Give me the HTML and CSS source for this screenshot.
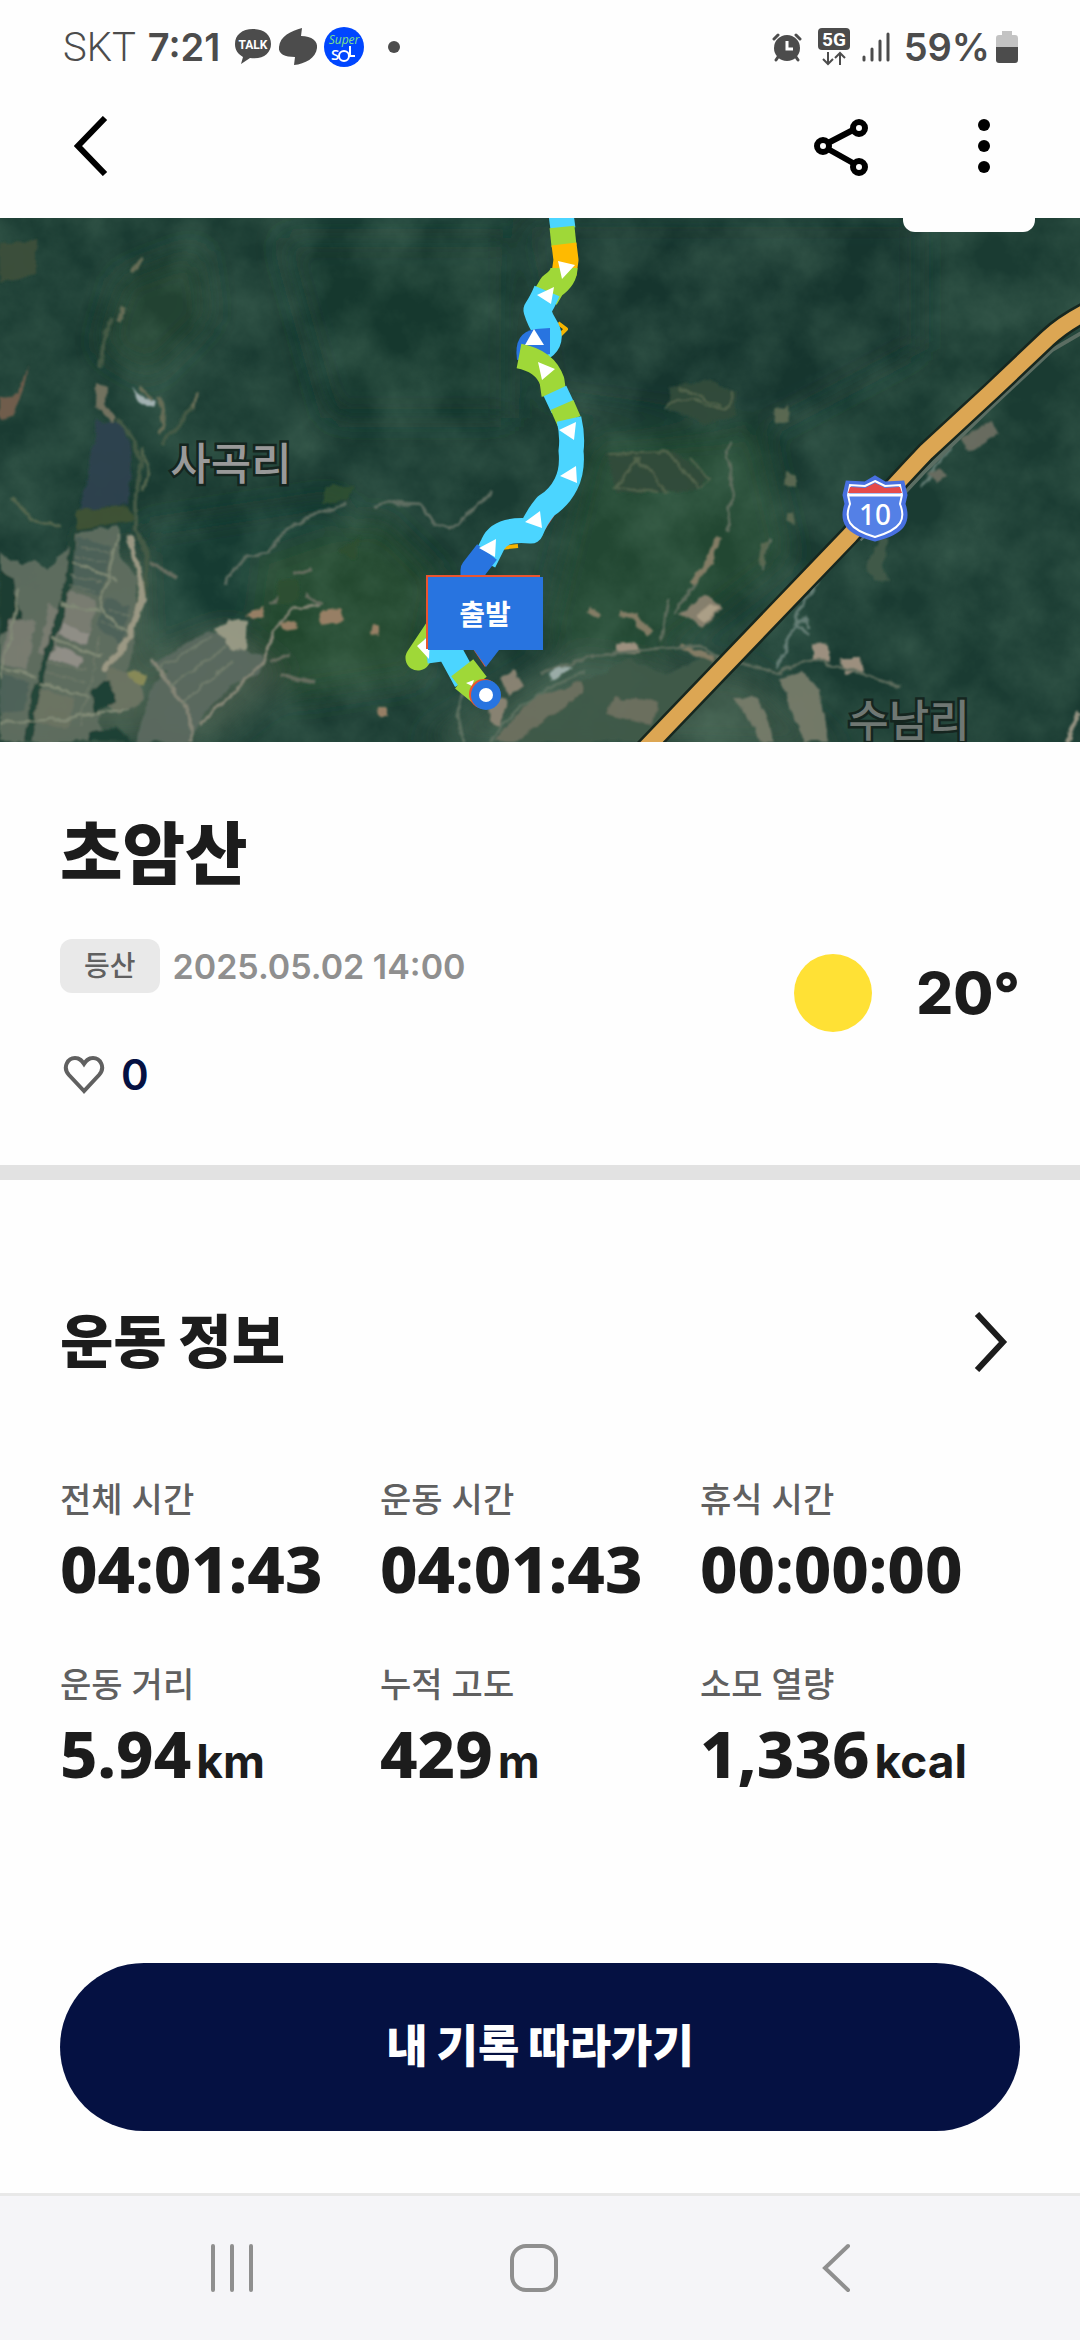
FILE: index.html
```html
<!DOCTYPE html>
<html lang="ko">
<head>
    <meta charset="UTF-8">
    <meta name="viewport" content="width=device-width, initial-scale=1.0">
    <title>초암산</title>
    <link rel="stylesheet" href="styles.css">
</head>
<body>
    <div class="status-bar">
        <div class="status-left">
            <span class="carrier">SKT</span>
            <span class="clock">7:21</span>
            <svg class="status-icon" width="38" height="40" viewBox="0 0 38 40">
                <path d="M19 2C8 2 1 8 1 17c0 6 3 10 8 13l-2 7 9-6c13 2 21-5 21-14S30 2 19 2z" fill="#4c4c4c"/>
                <text x="19" y="22" class="talk-text">TALK</text>
            </svg>
            <svg class="status-icon" width="40" height="40" viewBox="0 0 40 40">
                <path d="M24 1L23 9C34 9 40 14 39 21C38 31 27 37 16 38L17 30C7 30 0 27 1 20C2 9 13 4 24 1z" fill="#4c4c4c"/>
            </svg>
            <svg class="status-icon" width="40" height="40" viewBox="0 0 40 40">
                <circle cx="20" cy="20" r="20" fill="#0046ff"/>
                <text x="20" y="17" class="super-text">Super</text>
                <text x="7" y="33" class="sol-text">S</text>
                <circle cx="20" cy="29" r="5" fill="none" stroke="#fff" stroke-width="2"/>
                <path d="M26 19v10h5" fill="none" stroke="#fff" stroke-width="2"/>
            </svg>
            <span class="more-dot"></span>
        </div>
        <div class="status-right">
            <svg width="30" height="30" viewBox="0 0 30 30">
                <g fill="none" stroke="#4c4c4c" stroke-width="3" stroke-linecap="round">
                    <path d="M2 7l4-4M28 7l-4-4M6 25l-2 3M24 25l2 3"/>
                </g>
                <circle cx="15" cy="16" r="13" fill="#4c4c4c"/>
                <path d="M15 9v8h6" fill="none" stroke="#fff" stroke-width="3"/>
            </svg>
            <svg class="network" width="32" height="38" viewBox="0 0 32 38">
                <rect width="32" height="22" rx="4" fill="#4c4c4c"/>
                <text x="16" y="18" class="network-text">5G</text>
                <path d="M10 24v12M5 31l5 5 5-5M22 37V25M17 30l5-5 5 5" fill="none" stroke="#4c4c4c" stroke-width="2"/>
            </svg>
            <svg class="signal" width="28" height="30" viewBox="0 0 28 30">
                <path d="M2 25v3M10 17v11M18 9v19M26 2v26" fill="none" stroke="#4c4c4c" stroke-width="3" stroke-linecap="round"/>
            </svg>
            <span class="battery-text">59%</span>
            <svg width="22" height="32" viewBox="0 0 22 32">
                <path d="M6 0h10v4h3a3 3 0 0 1 3 3v10H0V7a3 3 0 0 1 3-3h3z" fill="#c3c3c3"/>
                <path d="M0 16h22v13a3 3 0 0 1-3 3H3a3 3 0 0 1-3-3z" fill="#4c4c4c"/>
            </svg>
        </div>
    </div>

    <header class="app-bar">
        <button class="icon-button" aria-label="뒤로">
            <svg width="34" height="60" viewBox="0 0 34 60"><path d="M31 2L4 30l27 28" fill="none" stroke="#000" stroke-width="6"/></svg>
        </button>
        <div class="app-actions">
            <button class="icon-button" aria-label="공유">
                <svg width="56" height="60" viewBox="0 0 56 60" fill="none" stroke="#000" stroke-width="6">
                    <path d="M15 27l25-13M15 33l25 14"/>
                    <circle cx="10" cy="30" r="6"/>
                    <circle cx="46" cy="12" r="6"/>
                    <circle cx="46" cy="51" r="6"/>
                </svg>
            </button>
            <button class="icon-button" aria-label="메뉴">
                <svg width="14" height="60" viewBox="0 0 14 60"><circle cx="7" cy="9" r="6"/><circle cx="7" cy="30" r="6"/><circle cx="7" cy="51" r="6"/></svg>
            </button>
        </div>
    </header>

    <div class="map">
        <svg class="map-canvas" viewBox="0 0 1080 524" preserveAspectRatio="xMidYMid slice">
            <defs>
                <filter id="forest" x="0" y="0" width="100%" height="100%">
                    <feTurbulence type="fractalNoise" baseFrequency="0.016" numOctaves="6" seed="21"/>
                    <feColorMatrix values="0 0 0 0 0.17  0 0 0 0 0.32  0 0 0 0 0.22  1.4 0 0 0 -0.4"/>
                </filter>
                <filter id="rough" x="-5%" y="-5%" width="110%" height="110%">
                    <feTurbulence type="fractalNoise" baseFrequency="0.07" numOctaves="3" seed="3" result="n"/>
                    <feDisplacementMap in="SourceGraphic" in2="n" scale="8" xChannelSelector="R" yChannelSelector="G"/>
                    <feGaussianBlur stdDeviation="1"/>
                </filter>
                <filter id="soft" x="-20%" y="-20%" width="140%" height="140%">
                    <feGaussianBlur stdDeviation="14"/>
                </filter>
            </defs>

            <rect width="1080" height="524" fill="#1a3b32"/>
            <g filter="url(#soft)">
                <path d="M520 0h400v130l-150 80-220-30z" fill="#15352e"/>
                <path d="M280 20h230v180H330z" fill="#16382f"/>
                <path d="M120 60l80-30 10 70-60 60-50-30z" fill="#234331"/>
                <path d="M140 310l200-30 40 110-170 50-60-10z" fill="#183a30"/>
                <path d="M260 340l120-40 60 60-20 100-130 20-40-60z" fill="#22462f"/>
                <path d="M590 220l170-10 30 130-130 100-120-10z" fill="#244733"/>
                <path d="M0 410l140-80 10 194H0zM150 440l80-30 60 50-80 64h-60z" fill="#43594a"/>
                <path d="M420 524l150-90 180 20 90 80z" fill="#385344"/>
            </g>
            <rect width="1080" height="524" filter="url(#forest)" opacity="0.35"/>

            <g filter="url(#rough)" opacity="0.95">
                <!-- clearings and reservoir on the west side -->
                <path d="M0 26l36-3v34L0 64z" fill="#3c4f3b"/>
                <path d="M28 148l-10 28-18 2v24l14-6 10-26z" fill="#755f4d"/>
                <path d="M97 202l22 2 14 28-5 54-49 7 9-37z" fill="#2d4350"/>
                <path d="M76 293l52-6 6 16-58 10z" fill="#3f5234"/>
                <path d="M97 165l9 3-1 18 12 14-5 4-16-17z" fill="#777462"/>
                <path d="M132 170l16 12 8 1-2 6-13-3z" fill="#a9b7b8"/>
                <path d="M142 40l-10 14M125 90l-6 14M195 175l-3 18M160 180l4 28-4 8M140 170l14 12" fill="none" stroke="#6a6f58" stroke-width="4"/>
                <path d="M112 100l-8 20-4 30M192 190l-30 36M118 202l16 20 8 20-7 40 0 30 12 22-2 40-12 24" fill="none" stroke="#465c46" stroke-width="4"/>
                <path d="M143 230l6 26-8 18M60 310l-26-6-24-26" fill="none" stroke="#566850" stroke-width="3"/>

                <!-- paddy fields -->
                <path d="M0 334l20 12 15-2 12 9 23-26 6-12 42-7 4 30 14 24 1 40-5 38-14 24-20 22 4 38H0z" fill="#606e61"/>
                <path d="M0 350l14 14 8 40-22 14z" fill="#1c3c31"/>
                <path d="M50 386l14 8-10 44-16-4zM66 372l30 10-6 34-30-10zM10 400l26 4-10 50-26-10z" fill="#7b7e73"/>
                <path d="M78 318l34 12-12 48-30-10zM106 380l24 8-8 40-26-20zM0 455l30 8-6 30-24 2z" fill="#50635a"/>
                <path d="M60 405l30 12-3 10-30-12zM56 428l28 10-5 12-29-8z" fill="#94918a"/>
                <path d="M36 470l40 10-8 30-38-6zM110 450l30 4 4 28-24 14-18-10z" fill="#6d7464"/>
                <path d="M74 310l-5 52-15 54-18 60-8 48" fill="none" stroke="#244437" stroke-width="7"/>
                <path d="M118 318l-18 72 34 30M72 345l44 16M60 385l40 8M52 420l50 18M38 465l50 14M0 450l34 8M0 505l60-4 70-10M20 370l-10 50-10 40" fill="none" stroke="#87907a" stroke-width="2"/>
                <path d="M80 328l30 8M76 338l30 8M70 356l30 8M68 366l28 8M108 390l22 8M102 404l22 8M48 445l38 8M46 455l38 8M100 418l-20 90" fill="none" stroke="#76806f" stroke-width="1"/>
                <path d="M129 318l12 50 2 12-14 40-25 33" fill="none" stroke="#a09c87" stroke-width="6"/>
                <path d="M90 472l20-10 6 22-22 12zM90 514l26-6 18 16h-46z" fill="#1d4134"/>
                <path d="M127 452l22 6-4 10-16-8z" fill="#8b8c58"/>

                <!-- southern fields -->
                <path d="M150 448l58-36 54 26-2 18-26 10-30 28-14 30h-54l14-50 16-20z" fill="#5c6b60"/>
                <path d="M214 412l16-10 18 2-2 26-12 4z" fill="#9b9c87"/>
                <path d="M150 440l40 54M200 505l42-38 22-26 10-30 20-20 26-4M191 494v30" fill="none" stroke="#8b8a7a" stroke-width="3"/>
                <path d="M158 452l54-34M170 468l56-40M182 486l52-44" fill="none" stroke="#75806f" stroke-width="2"/>
                <path d="M245 397l18-10 2 11-12 3zM280 405l16-2 2 8-14 2zM320 395l20-4 4 12-22 4zM372 408l8 2v8l-10-3zM376 490l12 0 0 8-8 0z" fill="#9d8268"/>
                <path d="M225 366l8-16 16-12 20-4 18-24 26-14 34-10 M374 288l10-4 36 2 16 20 14 4 24-18 18-18" fill="none" stroke="#627064" stroke-width="3"/>
                <path d="M292 356l20-6M304 376l18 10M150 344l26 16M270 386l20-20M280 456l34 10M270 444l20-8" fill="none" stroke="#6a7062" stroke-width="4"/>
                <path d="M325 268l30 0-10 14-24 4zM280 360l20 4-4 20-22 4zM340 332l20-14-6 24z" fill="#2f4f30"/>
                <path d="M500 460l14-8 10 16-14 10zM490 476l16 4-4 30-14-8z" fill="#8d8574"/>
                <path d="M466 468l-9 30 6 26M488 524l32-34 30-20 34-16M500 524l56-40 40-12" fill="none" stroke="#5f7262" stroke-width="3"/>

                <!-- fields by the highway -->
                <path d="M520 494l58-30 30-10 20-14 40 16 40-20 22 6-52 60-36 22h-122z" fill="#3f5a4a"/>
                <path d="M535 480l45-16 4 10-70 50-22 0zM614 480l44 4-6 24-46-12z" fill="#6e7160"/>
                <path d="M735 480l24 0 16 44h-14zM780 460l24-8 16 20 8 52h-24z" fill="#777b6b"/>
                <path d="M680 395l28-20 14 16-20 20z" fill="#8b8270"/>
                <path d="M695 398l14-11 10 4-14 14z" fill="#b3a48c"/>
                <path d="M812 426l16 2 2 16-18-2zM840 440l20 0 2 14-18 2zM616 426l20-2 2 12-20 0z" fill="#a39483"/>
                <path d="M548 457l14-10 10 2-20 14z" fill="#9fb0ac"/>
                <path d="M620 394l14 4 16 18M588 390l12 8M690 366l20-22 8-24M680 428l34 14" fill="none" stroke="#887f68" stroke-width="6"/>
                <path d="M540 456l50-18 60-6 50-4 30 18M674 396l20-30M728 314l4-50-6-30 8-12M668 380l-6 44M760 350l10-30M740 445l40 10 30-14 50 14 40 14" fill="none" stroke="#627060" stroke-width="3"/>
                <path d="M792 405l14-4 4 10M792 405l18 12M840 330l-42 64-20 56M920 270l30-42" fill="none" stroke="#688078" stroke-width="3"/>
                <path d="M868 344l10-24 10 0-6 28 8 16-18-2z" fill="#425a48"/>
                <path d="M960 218l34-14 4 12-26 18zM928 256l12-6 8 6-12 10z" fill="#6c6e62"/>
                <path d="M670 170l40-8 28 14-4 24-30 4-36-12zM606 236l70-2 30 24-10 14-80 4z" fill="#334c3b"/>
                <path d="M665 190c10-14 30-10 46-2s20 4 22-14M680 170l40 18M608 236l60-2 30 36 12-8-20-22M640 240l-26 30 44 4M636 240l34 36" fill="none" stroke="#56674f" stroke-width="2"/>
                <path d="M773 190l14-2 2 18-14-2zM786 255l8 2v14l-10-6zM786 295l8 0 2 12-8-2zM762 324l6 0-4 22-6 0z" fill="#5d6b53"/>
                <path d="M1066 524l14-30" stroke="#9a9685" stroke-width="5"/>
            </g>

            <!-- highway -->
            <path d="M1090 110L1052 132L990 190L926 252L860 322" fill="none" stroke="#5b6d62" stroke-width="4"/>
            <path d="M1090 92Q1064 105 1048 120L991 174L926 234Q890 272 850 317L642 534" fill="none" stroke="#17271f" stroke-width="21"/>
            <path d="M1090 92Q1064 105 1048 120L991 174L926 234Q890 272 850 317L642 534" fill="none" stroke="#dca653" stroke-width="16"/>
            <path d="M875 259l10 6 18-1 3 13-2 9c6 18 0 29-29 36-29-7-35-18-29-36l-2-9 3-13 18 1z" fill="#4870e0" stroke="#4870e0" stroke-width="3"/>
            <path d="M875 263l10 5 15-1 2 10-2 9c6 15 2 25-25 33-27-8-31-18-25-33l-2-9 2-10 15 1z" fill="#5480e6" stroke="#fff" stroke-width="2"/>
            <path d="M850 269l15 1 10-5 10 5 15-1 2 6h-54z" fill="#e54a4a"/>
            <path d="M848 277h54" stroke="#fff" stroke-width="3"/>
            <text x="875" y="307" class="shield-text">10</text>

            <text x="231" y="262" class="place">사곡리</text>
            <text x="909" y="519" class="place dim">수남리</text>

            <!-- track, coloured by speed -->
            <g fill="none" stroke-width="25" stroke-linejoin="round">
                <path d="M558 105l8 6-8 8M574 190v25M574 245l-3 18-16 26M518 328l-18 2" stroke="#f5b400" stroke-width="4"/>
                <path d="M556 288l-16 24" stroke="#d83b2e" stroke-width="8"/>
                <path d="M561-4L563 11" stroke="#4bd5ff"/>
                <path d="M562 9L564 28" stroke="#9fd838"/>
                <path d="M564 26L566 42L564 56" stroke="#ffba00"/>
                <path d="M564 50Q564 60 552 68L545 80" stroke="#9fd838" stroke-width="27"/>
                <path d="M547 73Q542 85 537 92Q540 102 546 111Q552 122 542 129" stroke="#4bd5ff" stroke-width="27"/>
                <path d="M517 142Q513 114 536 111L550 110V136z" fill="#2874e0"/>
                <path d="M519 138Q545 143 552 163L554 177" stroke="#9fd838"/>
                <path d="M555 173L563 190" stroke="#4bd5ff"/>
                <path d="M562 187L569 203" stroke="#9fd838"/>
                <path d="M569 201Q573 218 571 233Q573 252 566 266Q559 280 546 288Q536 300 531 313Q500 310 493 326L484 344" stroke="#4bd5ff"/>
                <path d="M487 334L473 352V370" stroke="#2874e0"/>
                <path d="M438 410L418 440" stroke="#9fd838" stroke-linecap="round"/>
                <path d="M426 433L448 430L466 463" stroke="#4bd5ff"/>
                <path d="M458 467L480 450M462 462L484 480" stroke="#9fd838" stroke-width="22"/>
            </g>
            <g fill="#fff">
                <path d="M558 43l17 4-13 14zM537 77l17-8-3 17zM534 111l10 16h-19zM538 144l17 7-13 11zM559 212l17-8-2 18zM560 258l16-10 1 17zM525 304l15-11 2 17zM479 330l17-9-1 18zM417 428l13-11-1 24zM466 465l8-3-2 6z"/>
            </g>

            <!-- start marker -->
            <circle cx="484" cy="476" r="15" fill="#ea5530"/>
            <circle cx="486" cy="477" r="15" fill="#2874e0"/>
            <circle cx="486" cy="477" r="7" fill="#fff"/>
            <path d="M426 357h114v74h-42l-13 18-12-18h-47z" fill="#ea5530"/>
            <path d="M428 359h115v73h-44l-13 17-12-17h-46z" fill="#2874e0"/>
            <text x="485" y="407" class="start-text">출발</text>
        </svg>
        <div class="map-tab"></div>
    </div>

    <main>
        <section class="summary">
            <h1>초암산</h1>
            <div class="summary-row">
                <div>
                    <div class="meta">
                        <span class="chip">등산</span>
                        <time datetime="2025-05-02T14:00">2025.05.02 14:00</time>
                    </div>
                    <button class="like">
                        <svg width="42" height="40" viewBox="0 0 42 40"><path d="M21 36L6 20C-1 12 5 3 12 3c5 0 7 3 9 6 2-3 4-6 9-6 7 0 13 9 6 17z" fill="none" stroke="#606060" stroke-width="4"/></svg>
                        <span>0</span>
                    </button>
                </div>
                <div class="weather">
                    <span class="sun"></span>
                    <span>20°</span>
                </div>
            </div>
        </section>

        <section class="exercise">
            <a class="section-link" href="#">
                <h2>운동 정보</h2>
                <svg width="34" height="60" viewBox="0 0 34 60"><path d="M3 2l26 28L3 58" fill="none" stroke="#1c1c1c" stroke-width="6"/></svg>
            </a>
            <dl class="stats">
                <div><dt>전체 시간</dt><dd>04:01:43</dd></div>
                <div><dt>운동 시간</dt><dd>04:01:43</dd></div>
                <div><dt>휴식 시간</dt><dd>00:00:00</dd></div>
                <div><dt>운동 거리</dt><dd>5.94<small>km</small></dd></div>
                <div><dt>누적 고도</dt><dd>429<small>m</small></dd></div>
                <div><dt>소모 열량</dt><dd>1,336<small>kcal</small></dd></div>
            </dl>
            <button class="follow">내 기록 따라가기</button>
        </section>
    </main>

    <nav class="system-nav">
        <button aria-label="최근 앱"><svg width="48" height="50" viewBox="0 0 48 50"><path d="M5 3v44M24 3v44M43 3v44" stroke="#8f8f8f" stroke-width="4" stroke-linecap="round"/></svg></button>
        <button aria-label="홈"><svg width="50" height="50" viewBox="0 0 50 50"><rect x="3" y="3" width="44" height="44" rx="14" fill="none" stroke="#8f8f8f" stroke-width="4"/></svg></button>
        <button aria-label="이전"><svg width="50" height="50" viewBox="0 0 50 50"><path d="M37 3L14 25l23 22" fill="none" stroke="#8f8f8f" stroke-width="4" stroke-linecap="round"/></svg></button>
    </nav>
</body>
</html>
```
FILE: styles.css
```css
* {
    box-sizing: border-box;
}
body {
    display: flex;
    flex-direction: column;
    min-height: 100vh;
    margin: 0;
    background-color: #fefefe;
    color: #1c1c1c;
    font-family: Inter, "Noto Sans CJK KR", sans-serif;
}
h1, h2, dl, dd {
    margin: 0;
}
svg {
    display: block;
    flex-shrink: 0;
}
button {
    border: none;
    padding: 0;
    background: none;
    color: inherit;
    font-family: inherit;
    cursor: pointer;
}

/* status bar */
.status-bar {
    display: flex;
    justify-content: space-between;
    align-items: center;
    height: 94px;
    padding: 0 62px 0 63px;
    color: #4c4c4c;
    font-size: 38px;
}
.status-left, .status-right {
    display: flex;
    align-items: center;
}
.carrier {
    margin-right: 12px;
    font-family: Roboto, sans-serif;
    font-size: 40px;
    font-weight: 300;
}
.clock {
    margin-right: 14px;
    font-weight: 600;
}
.status-icon {
    margin-right: 6px;
}
.more-dot {
    width: 12px;
    height: 12px;
    margin-left: 18px;
    border-radius: 50%;
    background-color: #4c4c4c;
}
.talk-text {
    fill: #fff;
    font: 700 12px Roboto, sans-serif;
    text-anchor: middle;
}
.super-text {
    fill: #7ee08a;
    font: italic 12px "Open Sans", sans-serif;
    text-anchor: middle;
}
.sol-text {
    fill: #fff;
    font: 600 15px "Open Sans", sans-serif;
}
.network {
    margin-left: 16px;
}
.network-text {
    fill: #fff;
    font: 700 19px Roboto, sans-serif;
    text-anchor: middle;
}
.signal {
    margin: 0 14px 0 12px;
}
.battery-text {
    margin-right: 6px;
    font-weight: 600;
}

/* app bar */
.app-bar {
    display: flex;
    justify-content: space-between;
    align-items: center;
    height: 124px;
    padding: 0 89px 20px 74px;
}
.app-actions {
    display: flex;
    gap: 108px;
}

/* map */
.map {
    position: relative;
    aspect-ratio: 1080 / 524;
}
.map-canvas {
    width: 100%;
    height: 100%;
}
.map-tab {
    position: absolute;
    top: 0;
    right: 45px;
    width: 132px;
    height: 14px;
    border-radius: 0 0 12px 12px;
    background-color: #fefefe;
}
.place {
    fill: #999;
    stroke: #15251f;
    stroke-width: 5px;
    paint-order: stroke;
    font-size: 44px;
    font-weight: 500;
    text-anchor: middle;
}
.place.dim {
    fill: #6f7773;
}
.shield-text {
    fill: #fff;
    font: 500 28px "Noto Sans", sans-serif;
    text-anchor: middle;
}
.start-text {
    fill: #fff;
    font-size: 28px;
    font-weight: 700;
    text-anchor: middle;
}

/* summary */
.summary {
    padding: 72px 60px 66px;
    border-bottom: 15px solid #e2e2e2;
}
h1 {
    margin-bottom: 45px;
    font-size: 68px;
    font-weight: 900;
    line-height: 80px;
}
.summary-row {
    display: flex;
    justify-content: space-between;
    align-items: flex-start;
}
.meta {
    display: flex;
    align-items: center;
    gap: 13px;
    margin-bottom: 58px;
}
.chip {
    padding: 0 24px;
    border-radius: 12px;
    background-color: #e9e9e9;
    color: #606060;
    font-size: 28px;
    font-weight: 500;
    line-height: 54px;
}
.meta time {
    color: #8f8f8f;
    font-size: 34px;
    font-weight: 600;
}
.like {
    display: flex;
    align-items: center;
    gap: 16px;
    padding-left: 3px;
    color: #051142;
    font-size: 42px;
    font-weight: 600;
    line-height: 48px;
}
.weather {
    display: flex;
    align-items: center;
    gap: 44px;
    margin-top: 15px;
    font-size: 58px;
    font-weight: 800;
    line-height: 78px;
}
.sun {
    width: 78px;
    height: 78px;
    border-radius: 50%;
    background-color: #ffe135;
}

/* exercise info */
.exercise {
    padding: 130px 60px 60px;
}
.section-link {
    display: flex;
    justify-content: space-between;
    align-items: center;
    margin-bottom: 104px;
    padding-right: 12px;
    color: inherit;
    text-decoration: none;
}
h2 {
    font-size: 58px;
    font-weight: 900;
    line-height: 64px;
}
.stats {
    display: grid;
    grid-template-columns: repeat(3, 1fr);
    row-gap: 63px;
    margin-bottom: 178px;
}
.stats dt {
    margin-bottom: 14px;
    color: #606060;
    font-size: 34px;
    font-weight: 500;
    line-height: 44px;
}
.stats dd {
    font-family: "Noto Sans", sans-serif;
    font-size: 65px;
    font-weight: 800;
    line-height: 64px;
    white-space: nowrap;
}
.stats small {
    margin-left: 5px;
    font-family: Inter, sans-serif;
    font-size: 46px;
    font-weight: 700;
    line-height: 1;
}
.follow {
    display: block;
    width: 100%;
    border-radius: 84px;
    background-color: #051142;
    color: #fff;
    font-size: 45px;
    font-weight: 900;
    line-height: 168px;
}

/* system navigation */
.system-nav {
    display: grid;
    grid-template-columns: repeat(3, 302px);
    justify-content: center;
    align-items: center;
    height: 147px;
    margin-top: auto;
    padding-right: 12px;
    border-top: 3px solid #e8e8e8;
    background-color: #f5f5f8;
}
.system-nav button {
    display: flex;
    justify-content: center;
}
```
